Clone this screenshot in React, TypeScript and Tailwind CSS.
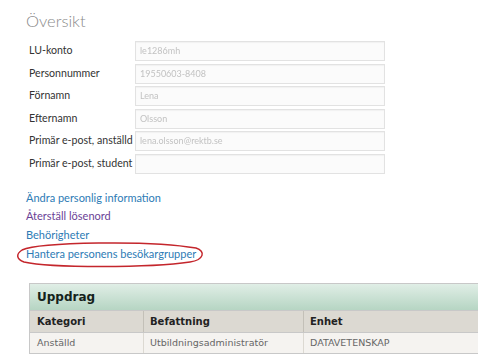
export default function App() {
  const fields = [
    { label: 'LU-konto', value: 'le1286mh' },
    { label: 'Personnummer', value: '19550603-8408' },
    { label: 'Förnamn', value: 'Lena' },
    { label: 'Efternamn', value: 'Olsson' },
    { label: 'Primär e-post, anställd', value: 'lena.olsson@rektb.se' },
    { label: 'Primär e-post, student', value: '' },
  ]

  return (
    <div className="relative h-[357px] w-[478px] overflow-hidden bg-white font-['Lato',sans-serif]">
      <div className="pl-[26px] pt-[9px]">
        <h1 className="text-[16.5px] font-light leading-[24px] text-[#8a8a8a]">Översikt</h1>

        <div className="mt-[8px] flex flex-col gap-[2.5px] pl-[3px]">
          {fields.map((f) => (
            <div key={f.label} className="flex items-center">
              <div className="w-[106px] whitespace-nowrap text-[10.6px] text-[#333]">{f.label}</div>
              <div className="flex h-[20px] w-[250px] items-center border border-[#e2e2e2] bg-[#fbfbfb] px-[4px] text-[9px] text-[#c2c2c2] shadow-[inset_0_1px_1px_rgba(0,0,0,0.04)]">
                <span className="blur-[0.7px]">{f.value}</span>
              </div>
            </div>
          ))}
        </div>

        <div className="mt-[15px] flex flex-col text-[11px] leading-[18.7px]">
          <a className="text-[#2d7bb5]">Ändra personlig information</a>
          <a className="text-[#6b3f96]">Återställ lösenord</a>
          <a className="text-[#2d7bb5]">Behörigheter</a>
          <a className="text-[#2d7bb5]">Hantera personens besökargrupper</a>
        </div>

        <div className="ml-[3px] mt-[20px] w-[470px] border border-[#c8c8c8] font-['DejaVu_Sans',sans-serif]">
          <div className="flex h-[26px] items-center bg-gradient-to-b from-[#e0eee6] to-[#b6d5c3] px-[7px] text-[12px] font-bold text-[#14221b]">
            Uppdrag
          </div>
          <div className="grid h-[22px] grid-cols-[113px_160px_1fr] border-t border-[#c8c8c8] bg-[#dcd9d2] text-[10px] font-bold leading-[21px] text-[#222]">
            <div className="px-[7px]">Kategori</div>
            <div className="border-l border-[#c3c0b8] px-[6px]">Befattning</div>
            <div className="border-l border-[#c3c0b8] px-[6px]">Enhet</div>
          </div>
          <div className="grid h-[21px] grid-cols-[113px_160px_1fr] border-t border-[#c8c8c8] bg-[#f5f3f0] text-[9.5px] leading-[20px] text-[#666]">
            <div className="px-[7px]">Anställd</div>
            <div className="border-l border-[#dcd9d2] px-[6px]">Utbildningsadministratör</div>
            <div className="border-l border-[#dcd9d2] px-[6px]">DATAVETENSKAP</div>
          </div>
        </div>
      </div>

      <svg className="absolute left-0 top-0" width="478" height="357" viewBox="0 0 478 357" fill="none">
        <path
          d="M 22 250 C 40 242, 150 240, 196 248 C 206 251, 204 260, 190 262 C 150 268, 50 268, 24 262 C 16 259, 16 254, 22 250"
          stroke="#c4262c"
          strokeWidth="1.5"
        />
      </svg>
    </div>
  )
}
